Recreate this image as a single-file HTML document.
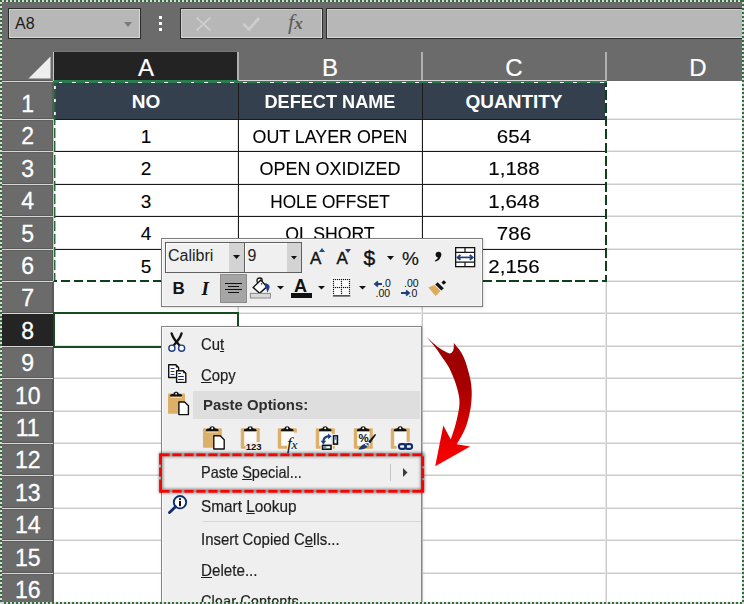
<!DOCTYPE html>
<html><head><meta charset="utf-8">
<style>
*{margin:0;padding:0;box-sizing:border-box}
html,body{width:744px;height:604px;overflow:hidden;background:#6b6b6b;font-family:"Liberation Sans",sans-serif}
.a{position:absolute}
.t{position:absolute;white-space:nowrap;line-height:normal}
svg{overflow:visible}
</style></head><body>
<div class="a" style="left:0;top:0;width:744px;height:604px;overflow:hidden">

<div class="a" style="left:8px;top:8px;width:133px;height:31px;background:#b7b7b7;border:1px solid #2c2c2c;box-shadow:inset 1px 1px 0 #cdcdcd, inset -1px -1px 0 #d9d9d9"></div>
<div class="t" style="left:15px;top:15.02px;font-size:16px;color:#1a1a1a;font-weight:normal;">A8</div>
<div class="a" style="left:124px;top:22px;width:0;height:0;border-left:4.5px solid transparent;border-right:4.5px solid transparent;border-top:5px solid #7a7a7a"></div>
<div class="a" style="left:158.5px;top:15.5px;width:3.5px;height:3.5px;background:#fff;"></div>
<div class="a" style="left:158.5px;top:21.5px;width:3.5px;height:3.5px;background:#fff;"></div>
<div class="a" style="left:158.5px;top:27.5px;width:3.5px;height:3.5px;background:#fff;"></div>
<div class="a" style="left:180px;top:8px;width:143px;height:31px;background:#b7b7b7;border:1px solid #2c2c2c;box-shadow:inset 1px 1px 0 #cdcdcd, inset -1px -1px 0 #d9d9d9"></div>
<div class="a" style="left:326px;top:8px;width:420px;height:31px;background:#b7b7b7;border:1px solid #2c2c2c;box-shadow:inset 1px 1px 0 #cdcdcd, inset -1px -1px 0 #d9d9d9"></div>
<svg class="a" style="left:195px;top:16px;" width="17" height="16" viewBox="0 0 17 16"><path d="M1.5,1.5 L15.5,14.5 M15.5,1.5 L1.5,14.5" stroke="#cdcdcd" stroke-width="1.8"/></svg>
<svg class="a" style="left:242px;top:16px;" width="18" height="16" viewBox="0 0 18 16"><path d="M1.5,8 L7,13.5 L17,2" stroke="#cdcdcd" stroke-width="2.8" fill="none"/></svg>
<div class="t" style="left:288px;top:9px;font-family:'Liberation Serif',serif;font-style:italic;font-size:22px;color:#5c5c5c">f<span style="font-size:17px;font-weight:bold">x</span></div>
<div class="a" style="left:54px;top:52px;width:184px;height:29px;background:#232323;"></div>
<div class="a" style="left:54px;top:51px;width:184px;height:1px;background:#777;"></div>
<div class="a" style="left:237px;top:52px;width:2px;height:29px;background:#b0b0b0;"></div>
<div class="a" style="left:421px;top:52px;width:2px;height:29px;background:#b0b0b0;"></div>
<div class="a" style="left:605px;top:52px;width:2px;height:29px;background:#b0b0b0;"></div>
<div class="a" style="left:53px;top:52px;width:1px;height:29px;background:#c8c8c8;"></div>
<div class="t" style="left:-54px;width:400px;text-align:center;top:53.78px;font-size:24px;color:#fff;font-weight:normal;-webkit-text-stroke:0.2px #fff">A</div>
<div class="t" style="left:130px;width:400px;text-align:center;top:53.78px;font-size:24px;color:#fff;font-weight:normal;-webkit-text-stroke:0.2px #fff">B</div>
<div class="t" style="left:314px;width:400px;text-align:center;top:53.78px;font-size:24px;color:#fff;font-weight:normal;-webkit-text-stroke:0.2px #fff">C</div>
<div class="t" style="left:498px;width:400px;text-align:center;top:53.78px;font-size:24px;color:#fff;font-weight:normal;-webkit-text-stroke:0.2px #fff">D</div>
<svg class="a" style="left:28px;top:56px;" width="23" height="23" viewBox="0 0 23 23"><polygon points="0.5,22.5 22.5,22.5 22.5,0.5" fill="#eeeeee"/></svg>
<div class="a" style="left:54px;top:81px;width:690px;height:523px;background:#fff;"></div>
<div class="a" style="left:54px;top:118px;width:690px;height:1px;background:#e6e6e6;"></div>
<div class="a" style="left:54px;top:119px;width:690px;height:1px;background:#cbcbcb;"></div>
<div class="a" style="left:54px;top:150px;width:690px;height:1px;background:#e6e6e6;"></div>
<div class="a" style="left:54px;top:151px;width:690px;height:1px;background:#cbcbcb;"></div>
<div class="a" style="left:54px;top:183px;width:690px;height:1px;background:#e6e6e6;"></div>
<div class="a" style="left:54px;top:184px;width:690px;height:1px;background:#cbcbcb;"></div>
<div class="a" style="left:54px;top:215px;width:690px;height:1px;background:#e6e6e6;"></div>
<div class="a" style="left:54px;top:216px;width:690px;height:1px;background:#cbcbcb;"></div>
<div class="a" style="left:54px;top:248px;width:690px;height:1px;background:#e6e6e6;"></div>
<div class="a" style="left:54px;top:249px;width:690px;height:1px;background:#cbcbcb;"></div>
<div class="a" style="left:54px;top:280px;width:690px;height:1px;background:#e6e6e6;"></div>
<div class="a" style="left:54px;top:281px;width:690px;height:1px;background:#cbcbcb;"></div>
<div class="a" style="left:54px;top:312px;width:690px;height:1px;background:#e6e6e6;"></div>
<div class="a" style="left:54px;top:313px;width:690px;height:1px;background:#cbcbcb;"></div>
<div class="a" style="left:54px;top:345px;width:690px;height:1px;background:#e6e6e6;"></div>
<div class="a" style="left:54px;top:346px;width:690px;height:1px;background:#cbcbcb;"></div>
<div class="a" style="left:54px;top:377px;width:690px;height:1px;background:#e6e6e6;"></div>
<div class="a" style="left:54px;top:378px;width:690px;height:1px;background:#cbcbcb;"></div>
<div class="a" style="left:54px;top:410px;width:690px;height:1px;background:#e6e6e6;"></div>
<div class="a" style="left:54px;top:411px;width:690px;height:1px;background:#cbcbcb;"></div>
<div class="a" style="left:54px;top:442px;width:690px;height:1px;background:#e6e6e6;"></div>
<div class="a" style="left:54px;top:443px;width:690px;height:1px;background:#cbcbcb;"></div>
<div class="a" style="left:54px;top:474px;width:690px;height:1px;background:#e6e6e6;"></div>
<div class="a" style="left:54px;top:475px;width:690px;height:1px;background:#cbcbcb;"></div>
<div class="a" style="left:54px;top:507px;width:690px;height:1px;background:#e6e6e6;"></div>
<div class="a" style="left:54px;top:508px;width:690px;height:1px;background:#cbcbcb;"></div>
<div class="a" style="left:54px;top:539px;width:690px;height:1px;background:#e6e6e6;"></div>
<div class="a" style="left:54px;top:540px;width:690px;height:1px;background:#cbcbcb;"></div>
<div class="a" style="left:54px;top:572px;width:690px;height:1px;background:#e6e6e6;"></div>
<div class="a" style="left:54px;top:573px;width:690px;height:1px;background:#cbcbcb;"></div>
<div class="a" style="left:54px;top:604px;width:690px;height:1px;background:#e6e6e6;"></div>
<div class="a" style="left:54px;top:605px;width:690px;height:1px;background:#cbcbcb;"></div>
<div class="a" style="left:237px;top:81px;width:1px;height:523px;background:#e6e6e6;"></div>
<div class="a" style="left:238px;top:81px;width:1px;height:523px;background:#cbcbcb;"></div>
<div class="a" style="left:421px;top:81px;width:1px;height:523px;background:#e6e6e6;"></div>
<div class="a" style="left:422px;top:81px;width:1px;height:523px;background:#cbcbcb;"></div>
<div class="a" style="left:605px;top:81px;width:1px;height:523px;background:#e6e6e6;"></div>
<div class="a" style="left:606px;top:81px;width:1px;height:523px;background:#cbcbcb;"></div>
<div class="a" style="left:0px;top:81px;width:53px;height:523px;background:#6b6b6b;"></div>
<div class="a" style="left:52px;top:81px;width:2px;height:523px;background:#5a5a5a;"></div>
<div class="a" style="left:0px;top:80px;width:53px;height:1px;background:#5a5a5a;"></div>
<div class="a" style="left:0px;top:82px;width:53px;height:1px;background:#5f5f5f;"></div>
<div class="a" style="left:0px;top:81px;width:53px;height:1px;background:#d8d8d8;"></div>
<div class="a" style="left:0px;top:118px;width:53px;height:1px;background:#5a5a5a;"></div>
<div class="a" style="left:0px;top:120px;width:53px;height:1px;background:#5f5f5f;"></div>
<div class="a" style="left:0px;top:119px;width:53px;height:1px;background:#d8d8d8;"></div>
<div class="a" style="left:0px;top:150px;width:53px;height:1px;background:#5a5a5a;"></div>
<div class="a" style="left:0px;top:152px;width:53px;height:1px;background:#5f5f5f;"></div>
<div class="a" style="left:0px;top:151px;width:53px;height:1px;background:#d8d8d8;"></div>
<div class="a" style="left:0px;top:183px;width:53px;height:1px;background:#5a5a5a;"></div>
<div class="a" style="left:0px;top:185px;width:53px;height:1px;background:#5f5f5f;"></div>
<div class="a" style="left:0px;top:184px;width:53px;height:1px;background:#d8d8d8;"></div>
<div class="a" style="left:0px;top:215px;width:53px;height:1px;background:#5a5a5a;"></div>
<div class="a" style="left:0px;top:217px;width:53px;height:1px;background:#5f5f5f;"></div>
<div class="a" style="left:0px;top:216px;width:53px;height:1px;background:#d8d8d8;"></div>
<div class="a" style="left:0px;top:248px;width:53px;height:1px;background:#5a5a5a;"></div>
<div class="a" style="left:0px;top:250px;width:53px;height:1px;background:#5f5f5f;"></div>
<div class="a" style="left:0px;top:249px;width:53px;height:1px;background:#d8d8d8;"></div>
<div class="a" style="left:0px;top:280px;width:53px;height:1px;background:#5a5a5a;"></div>
<div class="a" style="left:0px;top:282px;width:53px;height:1px;background:#5f5f5f;"></div>
<div class="a" style="left:0px;top:281px;width:53px;height:1px;background:#d8d8d8;"></div>
<div class="a" style="left:0px;top:312px;width:53px;height:1px;background:#5a5a5a;"></div>
<div class="a" style="left:0px;top:314px;width:53px;height:1px;background:#5f5f5f;"></div>
<div class="a" style="left:0px;top:313px;width:53px;height:1px;background:#d8d8d8;"></div>
<div class="a" style="left:0px;top:345px;width:53px;height:1px;background:#5a5a5a;"></div>
<div class="a" style="left:0px;top:347px;width:53px;height:1px;background:#5f5f5f;"></div>
<div class="a" style="left:0px;top:346px;width:53px;height:1px;background:#d8d8d8;"></div>
<div class="a" style="left:0px;top:377px;width:53px;height:1px;background:#5a5a5a;"></div>
<div class="a" style="left:0px;top:379px;width:53px;height:1px;background:#5f5f5f;"></div>
<div class="a" style="left:0px;top:378px;width:53px;height:1px;background:#d8d8d8;"></div>
<div class="a" style="left:0px;top:410px;width:53px;height:1px;background:#5a5a5a;"></div>
<div class="a" style="left:0px;top:412px;width:53px;height:1px;background:#5f5f5f;"></div>
<div class="a" style="left:0px;top:411px;width:53px;height:1px;background:#d8d8d8;"></div>
<div class="a" style="left:0px;top:442px;width:53px;height:1px;background:#5a5a5a;"></div>
<div class="a" style="left:0px;top:444px;width:53px;height:1px;background:#5f5f5f;"></div>
<div class="a" style="left:0px;top:443px;width:53px;height:1px;background:#d8d8d8;"></div>
<div class="a" style="left:0px;top:474px;width:53px;height:1px;background:#5a5a5a;"></div>
<div class="a" style="left:0px;top:476px;width:53px;height:1px;background:#5f5f5f;"></div>
<div class="a" style="left:0px;top:475px;width:53px;height:1px;background:#d8d8d8;"></div>
<div class="a" style="left:0px;top:507px;width:53px;height:1px;background:#5a5a5a;"></div>
<div class="a" style="left:0px;top:509px;width:53px;height:1px;background:#5f5f5f;"></div>
<div class="a" style="left:0px;top:508px;width:53px;height:1px;background:#d8d8d8;"></div>
<div class="a" style="left:0px;top:539px;width:53px;height:1px;background:#5a5a5a;"></div>
<div class="a" style="left:0px;top:541px;width:53px;height:1px;background:#5f5f5f;"></div>
<div class="a" style="left:0px;top:540px;width:53px;height:1px;background:#d8d8d8;"></div>
<div class="a" style="left:0px;top:572px;width:53px;height:1px;background:#5a5a5a;"></div>
<div class="a" style="left:0px;top:574px;width:53px;height:1px;background:#5f5f5f;"></div>
<div class="a" style="left:0px;top:573px;width:53px;height:1px;background:#d8d8d8;"></div>
<div class="a" style="left:0px;top:314px;width:53px;height:32px;background:#242424;"></div>
<div class="t" style="left:-172.3px;width:400px;text-align:center;top:91.19px;font-size:23px;color:#fff;font-weight:normal;-webkit-text-stroke:0.3px #fff">1</div>
<div class="t" style="left:-172.3px;width:400px;text-align:center;top:123.19px;font-size:23px;color:#fff;font-weight:normal;-webkit-text-stroke:0.3px #fff">2</div>
<div class="t" style="left:-172.3px;width:400px;text-align:center;top:156.19px;font-size:23px;color:#fff;font-weight:normal;-webkit-text-stroke:0.3px #fff">3</div>
<div class="t" style="left:-172.3px;width:400px;text-align:center;top:188.19px;font-size:23px;color:#fff;font-weight:normal;-webkit-text-stroke:0.3px #fff">4</div>
<div class="t" style="left:-172.3px;width:400px;text-align:center;top:221.19px;font-size:23px;color:#fff;font-weight:normal;-webkit-text-stroke:0.3px #fff">5</div>
<div class="t" style="left:-172.3px;width:400px;text-align:center;top:253.19px;font-size:23px;color:#fff;font-weight:normal;-webkit-text-stroke:0.3px #fff">6</div>
<div class="t" style="left:-172.3px;width:400px;text-align:center;top:285.19px;font-size:23px;color:#fff;font-weight:normal;-webkit-text-stroke:0.3px #fff">7</div>
<div class="t" style="left:-172.3px;width:400px;text-align:center;top:318.19px;font-size:23px;color:#fff;font-weight:normal;-webkit-text-stroke:0.3px #fff">8</div>
<div class="t" style="left:-172.3px;width:400px;text-align:center;top:350.19px;font-size:23px;color:#fff;font-weight:normal;-webkit-text-stroke:0.3px #fff">9</div>
<div class="t" style="left:-172.3px;width:400px;text-align:center;top:383.19px;font-size:23px;color:#fff;font-weight:normal;-webkit-text-stroke:0.3px #fff">10</div>
<div class="t" style="left:-172.3px;width:400px;text-align:center;top:415.19px;font-size:23px;color:#fff;font-weight:normal;-webkit-text-stroke:0.3px #fff">11</div>
<div class="t" style="left:-172.3px;width:400px;text-align:center;top:447.19px;font-size:23px;color:#fff;font-weight:normal;-webkit-text-stroke:0.3px #fff">12</div>
<div class="t" style="left:-172.3px;width:400px;text-align:center;top:480.19px;font-size:23px;color:#fff;font-weight:normal;-webkit-text-stroke:0.3px #fff">13</div>
<div class="t" style="left:-172.3px;width:400px;text-align:center;top:512.18px;font-size:23px;color:#fff;font-weight:normal;-webkit-text-stroke:0.3px #fff">14</div>
<div class="t" style="left:-172.3px;width:400px;text-align:center;top:545.18px;font-size:23px;color:#fff;font-weight:normal;-webkit-text-stroke:0.3px #fff">15</div>
<div class="t" style="left:-172.3px;width:400px;text-align:center;top:577.18px;font-size:23px;color:#fff;font-weight:normal;-webkit-text-stroke:0.3px #fff">16</div>
<div class="a" style="left:54px;top:81px;width:552px;height:38px;background:#35404f;"></div>
<div class="a" style="left:54px;top:119px;width:552px;height:1px;background:#1a1a1a;"></div>
<div class="a" style="left:54px;top:151px;width:552px;height:1px;background:#1a1a1a;"></div>
<div class="a" style="left:54px;top:184px;width:552px;height:1px;background:#1a1a1a;"></div>
<div class="a" style="left:54px;top:216px;width:552px;height:1px;background:#1a1a1a;"></div>
<div class="a" style="left:54px;top:249px;width:552px;height:1px;background:#1a1a1a;"></div>
<div class="a" style="left:238px;top:81px;width:1px;height:200px;background:#1a1a1a;"></div>
<div class="a" style="left:422px;top:81px;width:1px;height:200px;background:#1a1a1a;"></div>
<div class="t" style="left:-54px;width:400px;text-align:center;top:91.31px;font-size:19px;color:#fff;font-weight:bold;">NO</div>
<div class="t" style="left:130px;width:400px;text-align:center;top:91.31px;font-size:19px;color:#fff;font-weight:bold;transform:scaleX(0.954);">DEFECT NAME</div>
<div class="t" style="left:314px;width:400px;text-align:center;top:91.31px;font-size:19px;color:#fff;font-weight:bold;">QUANTITY</div>
<div class="t" style="left:-54px;width:400px;text-align:center;top:125.81px;font-size:19px;color:#000;font-weight:normal;-webkit-text-stroke:0.12px #000">1</div>
<div class="t" style="left:130px;width:400px;text-align:center;top:125.81px;font-size:19px;color:#000;font-weight:normal;transform:scaleX(0.939);-webkit-text-stroke:0.12px #000">OUT LAYER OPEN</div>
<div class="t" style="left:314px;width:400px;text-align:center;top:125.81px;font-size:19px;color:#000;font-weight:normal;transform:scaleX(1.08);-webkit-text-stroke:0.12px #000">654</div>
<div class="t" style="left:-54px;width:400px;text-align:center;top:157.81px;font-size:19px;color:#000;font-weight:normal;-webkit-text-stroke:0.12px #000">2</div>
<div class="t" style="left:130px;width:400px;text-align:center;top:157.81px;font-size:19px;color:#000;font-weight:normal;transform:scaleX(0.946);-webkit-text-stroke:0.12px #000">OPEN OXIDIZED</div>
<div class="t" style="left:314px;width:400px;text-align:center;top:157.81px;font-size:19px;color:#000;font-weight:normal;transform:scaleX(1.08);-webkit-text-stroke:0.12px #000">1,188</div>
<div class="t" style="left:-54px;width:400px;text-align:center;top:190.81px;font-size:19px;color:#000;font-weight:normal;-webkit-text-stroke:0.12px #000">3</div>
<div class="t" style="left:130px;width:400px;text-align:center;top:190.81px;font-size:19px;color:#000;font-weight:normal;transform:scaleX(0.905);-webkit-text-stroke:0.12px #000">HOLE OFFSET</div>
<div class="t" style="left:314px;width:400px;text-align:center;top:190.81px;font-size:19px;color:#000;font-weight:normal;transform:scaleX(1.08);-webkit-text-stroke:0.12px #000">1,648</div>
<div class="t" style="left:-54px;width:400px;text-align:center;top:222.81px;font-size:19px;color:#000;font-weight:normal;-webkit-text-stroke:0.12px #000">4</div>
<div class="t" style="left:130px;width:400px;text-align:center;top:222.81px;font-size:19px;color:#000;font-weight:normal;transform:scaleX(0.93);-webkit-text-stroke:0.12px #000">OL SHORT</div>
<div class="t" style="left:314px;width:400px;text-align:center;top:222.81px;font-size:19px;color:#000;font-weight:normal;transform:scaleX(1.08);-webkit-text-stroke:0.12px #000">786</div>
<div class="t" style="left:-54px;width:400px;text-align:center;top:255.81px;font-size:19px;color:#000;font-weight:normal;-webkit-text-stroke:0.12px #000">5</div>
<div class="t" style="left:314px;width:400px;text-align:center;top:255.81px;font-size:19px;color:#000;font-weight:normal;transform:scaleX(1.08);-webkit-text-stroke:0.12px #000">2,156</div>
<div class="a" style="left:54px;top:80px;width:184px;height:1px;background:#2a7d4c;"></div>
<div class="a" style="left:239px;top:80px;width:367px;height:1px;background:#d4d4d4;"></div>
<div class="a" style="left:54px;top:81px;width:553px;height:2px;background:repeating-linear-gradient(90deg,#2a7d4c 0 4.6px,#ffffff 4.6px 8.4px,#2a7d4c 8.4px 13.2px);"></div>
<div class="a" style="left:54px;top:81px;width:553px;height:1px;background:#2a7d4c;"></div>
<div class="a" style="left:53px;top:119px;width:1px;height:162px;background:#c8c8c8;"></div>
<div class="a" style="left:54px;top:83px;width:1px;height:199px;background:repeating-linear-gradient(180deg,#1f6a36 0 2.6px,#f4f4f4 2.6px 5.6px,#1f6a36 5.6px 13.2px);"></div>
<div class="a" style="left:55px;top:83px;width:1px;height:199px;background:repeating-linear-gradient(180deg,rgba(31,106,54,0.45) 0 2.6px,rgba(255,255,255,0.8) 2.6px 5.6px,rgba(31,106,54,0.45) 5.6px 13.2px);"></div>
<div class="a" style="left:605px;top:83px;width:2px;height:199px;background:repeating-linear-gradient(180deg,#0e4019 0 3.6px,#ffffff 3.6px 6.8px,#0e4019 6.8px 13.2px);"></div>
<div class="a" style="left:54px;top:280px;width:553px;height:2px;background:repeating-linear-gradient(90deg,#0e4019 0 2.9px,#ffffff 2.9px 6.7px,#0e4019 6.7px 13.2px);"></div>
<div class="a" style="left:53px;top:312px;width:186px;height:36px;border:2px solid #134d20"></div>
<div class="a" style="left:161px;top:238px;width:322px;height:69px;background:#efefef;border:1px solid #7d7d7d;box-shadow:inset 1px 1px 0 #fafafa, inset -1px -1px 0 #fafafa, 1px 1px 3px rgba(0,0,0,0.12)"></div>
<div class="a" style="left:165px;top:242px;width:80px;height:31px;background:#f0f0f0;border:1px solid #5e5e5e;box-shadow:inset 1px 1px 0 #fbfbfb"></div>
<div class="a" style="left:229px;top:243px;width:15px;height:29px;background:#d3d3d3;"></div>
<svg class="a" style="left:233px;top:255px;" width="7" height="4" viewBox="0 0 7 4"><polygon points="0,0 7,0 3.5,4" fill="#111"/></svg>
<div class="t" style="left:168px;top:247.12px;font-size:16px;color:#222;font-weight:normal;">Calibri</div>
<div class="a" style="left:244px;top:242px;width:58px;height:31px;background:#f0f0f0;border:1px solid #5e5e5e;box-shadow:inset 1px 1px 0 #fbfbfb"></div>
<div class="a" style="left:287px;top:243px;width:14px;height:29px;background:#d3d3d3;"></div>
<svg class="a" style="left:291px;top:256px;" width="6" height="3.5" viewBox="0 0 6 3.5"><polygon points="0,0 6,0 3,3.5" fill="#111"/></svg>
<div class="t" style="left:247.5px;top:247.12px;font-size:16px;color:#222;font-weight:normal;">9</div>
<div class="t" style="left:310px;top:249.12px;font-size:17px;color:#111;font-weight:normal;-webkit-text-stroke:0.4px #111">A</div>
<svg class="a" style="left:319px;top:248px;" width="6" height="4" viewBox="0 0 6 4"><polygon points="0,4 3,0 6,4" fill="#1e4e8c"/></svg>
<div class="t" style="left:336.5px;top:249.12px;font-size:17px;color:#111;font-weight:normal;-webkit-text-stroke:0.4px #111">A</div>
<svg class="a" style="left:345px;top:249px;" width="6" height="4" viewBox="0 0 6 4"><polygon points="0,0 6,0 3,4" fill="#1f3a6e"/></svg>
<div class="t" style="left:363.5px;top:246.00px;font-size:21px;color:#111;font-weight:normal;-webkit-text-stroke:0.4px #111">$</div>
<svg class="a" style="left:387px;top:256px;" width="7" height="4" viewBox="0 0 7 4"><polygon points="0,0 7,0 3.5,4" fill="#111"/></svg>
<div class="t" style="left:402px;top:247.81px;font-size:19px;color:#111;font-weight:normal;-webkit-text-stroke:0.15px #111">%</div>
<svg class="a" style="left:432px;top:250px;" width="12" height="14" viewBox="0 0 12 14"><circle cx="6.5" cy="4.6" r="2.9" fill="#111"/><path d="M8.6,5.4 C8.8,8.5 6.5,10.8 3,11.6 L2.8,10.6 C5,9.6 6.2,8.2 6,6.2 Z" fill="#111"/></svg>
<svg class="a" style="left:455px;top:247px;" width="21" height="21" viewBox="0 0 21 21"><rect x="0.65" y="0.65" width="19" height="19" fill="#fff" stroke="#111" stroke-width="1.3"/><path d="M0.6,5.4 H19.6 M0.6,15.2 H19.6 M10,0.6 V5.4 M10,15.2 V19.6" stroke="#111" stroke-width="1.2"/><path d="M3.2,10.4 H17" stroke="#1f3f7a" stroke-width="1.7"/><path d="M5.4,8 L2.6,10.4 L5.4,12.8 M14.8,8 L17.6,10.4 L14.8,12.8" stroke="#1f3f7a" stroke-width="1.9" fill="none"/></svg>
<div class="t" style="left:172.5px;top:278.81px;font-size:17px;color:#111;font-weight:bold;">B</div>
<div class="t" style="left:201.5px;top:277.5px;font-family:'Liberation Serif',serif;font-style:italic;font-weight:bold;font-size:19px;color:#111">I</div>
<div class="a" style="left:220px;top:274px;width:27px;height:29px;background:#a5a5a5;border:1px solid #8c8c8c"></div>
<div class="a" style="left:225px;top:283px;width:17px;height:1.3px;background:#111;"></div>
<div class="a" style="left:228px;top:286px;width:11px;height:1.3px;background:#111;"></div>
<div class="a" style="left:225px;top:289px;width:17px;height:1.3px;background:#111;"></div>
<div class="a" style="left:228px;top:292px;width:11px;height:1.3px;background:#111;"></div>
<svg class="a" style="left:248px;top:274px;" width="26" height="26" viewBox="0 0 26 26"><path d="M9.6,9.2 C8.2,5.5 9.2,4 11.6,4 C14,4 14.8,5.2 13.6,7.6" fill="none" stroke="#111" stroke-width="1.3"/><path d="M5.2,13.4 L12.9,6 L18.75,12.9 L11.6,19.2 Z" fill="#fff" stroke="#111" stroke-width="1.4" stroke-linejoin="miter"/><path d="M13.6,9.2 V10.5" stroke="#111" stroke-width="1.2"/><path d="M16.5,9 C19.5,9.3 22,11 21.6,13.2 C21.2,15.2 20.2,17 19.1,18.6 C18.8,16 18.4,14 17.3,12.8 Z" fill="#1f3f8a"/><rect x="2.4" y="19.4" width="20" height="4.6" fill="#dadada" stroke="#8a8a8a" stroke-width="1"/></svg>
<svg class="a" style="left:277px;top:286px;" width="7" height="3.5" viewBox="0 0 7 3.5"><polygon points="0,0 7,0 3.5,3.5" fill="#111"/></svg>
<div class="t" style="left:294px;top:275.71px;font-size:18px;color:#111;font-weight:bold;">A</div>
<div class="a" style="left:291px;top:293px;width:21px;height:5px;background:#111;"></div>
<svg class="a" style="left:318px;top:286px;" width="7" height="3.5" viewBox="0 0 7 3.5"><polygon points="0,0 7,0 3.5,3.5" fill="#111"/></svg>
<svg class="a" style="left:328px;top:274px;" width="26" height="26" viewBox="0 0 26 26"><rect x="3.5" y="3.5" width="19" height="19.5" fill="#fff"/><rect x="4.9" y="4.9" width="1.2" height="1.2" fill="#111"/><rect x="4.9" y="6.9" width="1.2" height="1.2" fill="#111"/><rect x="4.9" y="8.9" width="1.2" height="1.2" fill="#111"/><rect x="4.9" y="10.9" width="1.2" height="1.2" fill="#111"/><rect x="4.9" y="12.9" width="1.2" height="1.2" fill="#111"/><rect x="4.9" y="14.9" width="1.2" height="1.2" fill="#111"/><rect x="4.9" y="16.9" width="1.2" height="1.2" fill="#111"/><rect x="4.9" y="18.9" width="1.2" height="1.2" fill="#111"/><rect x="6.9" y="4.9" width="1.2" height="1.2" fill="#111"/><rect x="6.9" y="12.9" width="1.2" height="1.2" fill="#111"/><rect x="8.9" y="4.9" width="1.2" height="1.2" fill="#111"/><rect x="8.9" y="12.9" width="1.2" height="1.2" fill="#111"/><rect x="10.9" y="4.9" width="1.2" height="1.2" fill="#111"/><rect x="10.9" y="12.9" width="1.2" height="1.2" fill="#111"/><rect x="12.9" y="4.9" width="1.2" height="1.2" fill="#111"/><rect x="12.9" y="6.9" width="1.2" height="1.2" fill="#111"/><rect x="12.9" y="8.9" width="1.2" height="1.2" fill="#111"/><rect x="12.9" y="10.9" width="1.2" height="1.2" fill="#111"/><rect x="12.9" y="12.9" width="1.2" height="1.2" fill="#111"/><rect x="12.9" y="14.9" width="1.2" height="1.2" fill="#111"/><rect x="12.9" y="16.9" width="1.2" height="1.2" fill="#111"/><rect x="12.9" y="18.9" width="1.2" height="1.2" fill="#111"/><rect x="14.9" y="4.9" width="1.2" height="1.2" fill="#111"/><rect x="14.9" y="12.9" width="1.2" height="1.2" fill="#111"/><rect x="16.9" y="4.9" width="1.2" height="1.2" fill="#111"/><rect x="16.9" y="12.9" width="1.2" height="1.2" fill="#111"/><rect x="18.9" y="4.9" width="1.2" height="1.2" fill="#111"/><rect x="18.9" y="12.9" width="1.2" height="1.2" fill="#111"/><rect x="20.9" y="4.9" width="1.2" height="1.2" fill="#111"/><rect x="20.9" y="6.9" width="1.2" height="1.2" fill="#111"/><rect x="20.9" y="8.9" width="1.2" height="1.2" fill="#111"/><rect x="20.9" y="10.9" width="1.2" height="1.2" fill="#111"/><rect x="20.9" y="12.9" width="1.2" height="1.2" fill="#111"/><rect x="20.9" y="14.9" width="1.2" height="1.2" fill="#111"/><rect x="20.9" y="16.9" width="1.2" height="1.2" fill="#111"/><rect x="20.9" y="18.9" width="1.2" height="1.2" fill="#111"/><rect x="4.8" y="21" width="17.5" height="1.7" fill="#555"/></svg>
<svg class="a" style="left:359px;top:286px;" width="7" height="3.5" viewBox="0 0 7 3.5"><polygon points="0,0 7,0 3.5,3.5" fill="#111"/></svg>
<svg class="a" style="left:374px;top:281px;" width="9" height="6" viewBox="0 0 9 6"><path d="M1,3 H8 M4,0.5 L1,3 L4,5.5" stroke="#1f3f7a" stroke-width="1.8" fill="none"/></svg>
<div class="t" style="left:382px;top:277.00px;font-size:10.5px;color:#111;font-weight:normal;">.0</div>
<div class="t" style="left:375.5px;top:286.70px;font-size:10.5px;color:#111;font-weight:normal;">.00</div>
<div class="t" style="left:404px;top:277.00px;font-size:10.5px;color:#111;font-weight:normal;">.00</div>
<svg class="a" style="left:401px;top:290px;" width="9" height="6" viewBox="0 0 9 6"><path d="M0,3 H7 M5,0.5 L8,3 L5,5.5" stroke="#1f3f7a" stroke-width="1.8" fill="none"/></svg>
<div class="t" style="left:408.5px;top:286.70px;font-size:10.5px;color:#111;font-weight:normal;">.0</div>
<svg class="a" style="left:424px;top:276px;" width="26" height="24" viewBox="0 0 26 24"><path d="M4.4,11.5 L10.2,9.1 L16.5,15.1 L11.6,19.9 Z" fill="#deaa58"/><path d="M11.2,8.4 L13.6,6.2 L19.8,12.3 L17.4,14.5 Z" fill="#111"/><path d="M17.4,6.6 L19.9,4.2 L22.2,6.4 L19.7,8.8 Z" fill="#111"/></svg>
<div class="a" style="left:161px;top:326px;width:261px;height:290px;background:#efefef;border:1px solid #858585;border-right:1.5px solid #858585;box-shadow:inset 1px 1px 0 #f9f9f9, 1px 1px 3px rgba(0,0,0,0.12)"></div>
<div class="a" style="left:193px;top:391px;width:227px;height:28px;background:#dedede;"></div>
<div class="t" style="left:200.5px;top:335.07px;font-size:16.5px;color:#1e1e1e;font-weight:normal;transform:scaleX(0.9);transform-origin:0 0;-webkit-text-stroke:0.2px #1e1e1e">Cu<u>t</u></div>
<div class="t" style="left:200.5px;top:366.27px;font-size:16.5px;color:#1e1e1e;font-weight:normal;transform:scaleX(0.9);transform-origin:0 0;-webkit-text-stroke:0.2px #1e1e1e"><u>C</u>opy</div>
<div class="t" style="left:203.2px;top:396.45px;font-size:15.3px;color:#2e2e2e;font-weight:bold;transform:scaleX(0.975);transform-origin:0 0;">Paste Options:</div>
<div class="t" style="left:201px;top:463.07px;font-size:16.5px;color:#1e1e1e;font-weight:normal;transform:scaleX(0.88);transform-origin:0 0;-webkit-text-stroke:0.2px #1e1e1e">Paste <u>S</u>pecial...</div>
<div class="t" style="left:200.5px;top:497.37px;font-size:16.5px;color:#1e1e1e;font-weight:normal;transform:scaleX(0.93);transform-origin:0 0;-webkit-text-stroke:0.2px #1e1e1e">Smart <u>L</u>ookup</div>
<div class="a" style="left:203px;top:521px;width:218px;height:1px;background:#d6d6d6;"></div>
<div class="t" style="left:200.5px;top:529.77px;font-size:16.5px;color:#1e1e1e;font-weight:normal;transform:scaleX(0.905);transform-origin:0 0;-webkit-text-stroke:0.2px #1e1e1e">Insert Copied C<u>e</u>lls...</div>
<div class="t" style="left:200.5px;top:561.07px;font-size:16.5px;color:#1e1e1e;font-weight:normal;transform:scaleX(0.92);transform-origin:0 0;-webkit-text-stroke:0.2px #1e1e1e"><u>D</u>elete...</div>
<div class="t" style="left:200.5px;top:592.07px;font-size:16.5px;color:#1e1e1e;font-weight:normal;transform:scaleX(0.89);transform-origin:0 0;-webkit-text-stroke:0.2px #1e1e1e">Clear Contents</div>
<div class="a" style="left:390px;top:464px;width:1px;height:17px;background:#c4c4c4;"></div>
<svg class="a" style="left:403px;top:468px;" width="5" height="9" viewBox="0 0 5 9"><polygon points="0,0 4.5,4.5 0,9" fill="#3c3c3c"/></svg>
<svg class="a" style="left:167px;top:332px;" width="20" height="21" viewBox="0 0 20 21"><path d="M4.6,1.4 Q6.2,6.8 12.4,13.2" stroke="#111" stroke-width="2.3" fill="none" stroke-linecap="round"/><path d="M14.6,1.4 Q13,6.8 6.8,13.2" stroke="#111" stroke-width="2.3" fill="none" stroke-linecap="round"/><circle cx="4.9" cy="16.2" r="3.05" fill="#fbfbfb" stroke="#1f3f80" stroke-width="1.4"/><circle cx="14.6" cy="16.2" r="3.05" fill="#fbfbfb" stroke="#1f3f80" stroke-width="1.4"/></svg>
<svg class="a" style="left:164px;top:360px;" width="26" height="26" viewBox="0 0 26 26"><path d="M4.7,4.7 H11.8 L14.6,7.5 V17.5 H4.7 Z" fill="#fff" stroke="#111" stroke-width="1.4" stroke-linejoin="round"/><path d="M11.8,4.7 V7.5 H14.6" fill="#111"/><path d="M6.6,8.5 H10.4 M6.6,11.5 H10.4 M6.6,14.5 H10.4" stroke="#1f3a78" stroke-width="1.1"/><path d="M12.6,10.7 H19.2 L21.8,13.3 V22.4 H12.6 Z" fill="#fff" stroke="#111" stroke-width="1.4" stroke-linejoin="round"/><path d="M19.2,10.7 V13.3 H21.8" fill="#111"/><path d="M14.2,13.5 H16.8 M14.2,16.5 H19.8 M14.2,19.5 H19.8" stroke="#0f2a6a" stroke-width="1.1"/></svg>
<svg class="a" style="left:165px;top:390px;" width="28" height="28" viewBox="0 0 28 28"><rect x="3" y="3.6" width="17" height="20.2" rx="0.8" fill="#ddb06a"/><rect x="6" y="6.6" width="11" height="1.2" fill="#f3e2c4"/><path d="M5.4,6.6 C4.9,6.6 4.9,4.6 6,4.3 L8.6,3.7 C8.6,1.2 13.6,1.2 13.6,3.7 L16.2,4.3 C17.3,4.6 17.3,6.6 16.8,6.6 Z" fill="#111"/><circle cx="11.1" cy="3.7" r="0.9" fill="#fff"/><path d="M13.9,12 H19.6 L23.4,15.8 V24.6 H13.9 Z" fill="#fff" stroke="#111" stroke-width="1.4" stroke-linejoin="round"/></svg>
<svg class="a" style="left:200px;top:422px;" width="28" height="30" viewBox="0 0 28 30"><rect x="3" y="6.3" width="18.8" height="19.5" rx="0.8" fill="#ddb06a"/><rect x="6.5" y="9.3" width="11.5" height="1.2" fill="#f3e2c4"/><path d="M6.2,9.3 C5.6,9.3 5.6,7.2 6.8,6.9 L9.6,6.3 C9.6,3.6 14.8,3.6 14.8,6.3 L17.6,6.9 C18.8,7.2 18.8,9.3 18.2,9.3 Z" fill="#111"/><circle cx="12.2" cy="6.3" r="1" fill="#fff"/><path d="M13.8,13.8 H20.2 L24.2,17.8 V27 H13.8 Z" fill="#fff" stroke="#111" stroke-width="1.4" stroke-linejoin="round"/></svg>
<svg class="a" style="left:238px;top:422px;" width="28" height="30" viewBox="0 0 28 30"><rect x="2.8" y="6.3" width="19" height="20.4" rx="0.8" fill="#ddb06a"/><rect x="6.2" y="9.4" width="12.4" height="14.4" fill="#fbfbfb"/><path d="M6.2,9.3 C5.6,9.3 5.6,7.2 6.8,6.9 L9.6,6.3 C9.6,3.6 14.8,3.6 14.8,6.3 L17.6,6.9 C18.8,7.2 18.8,9.3 18.2,9.3 Z" fill="#111"/><circle cx="12.2" cy="6.3" r="1" fill="#fff"/><rect x="7.6" y="20" width="17.4" height="8.2" fill="#f0f0f0"/><text x="7.7" y="27.6" font-family="Liberation Sans" font-weight="bold" font-size="9.6" fill="#111">123</text></svg>
<svg class="a" style="left:275px;top:422px;" width="28" height="30" viewBox="0 0 28 30"><rect x="2.8" y="6.3" width="19" height="20.4" rx="0.8" fill="#ddb06a"/><rect x="6.2" y="9.4" width="12.4" height="14.4" fill="#fbfbfb"/><path d="M6.2,9.3 C5.6,9.3 5.6,7.2 6.8,6.9 L9.6,6.3 C9.6,3.6 14.8,3.6 14.8,6.3 L17.6,6.9 C18.8,7.2 18.8,9.3 18.2,9.3 Z" fill="#111"/><circle cx="12.2" cy="6.3" r="1" fill="#fff"/><rect x="12.5" y="10.5" width="6.5" height="13.4" fill="#fbfbfb"/><rect x="19" y="10.5" width="4" height="17" fill="#f0f0f0"/><rect x="12" y="23.8" width="12" height="4" fill="#f0f0f0"/><text x="12" y="26.6" font-family="Liberation Serif" font-style="italic" font-size="17.5" fill="#111">f<tspan font-size="13.5" dx="-0.5">x</tspan></text></svg>
<svg class="a" style="left:313px;top:422px;" width="28" height="30" viewBox="0 0 28 30"><rect x="2.8" y="6.3" width="19" height="20.4" rx="0.8" fill="#ddb06a"/><rect x="6.2" y="9.4" width="12.4" height="14.4" fill="#fbfbfb"/><path d="M6.2,9.3 C5.6,9.3 5.6,7.2 6.8,6.9 L9.6,6.3 C9.6,3.6 14.8,3.6 14.8,6.3 L17.6,6.9 C18.8,7.2 18.8,9.3 18.2,9.3 Z" fill="#111"/><circle cx="12.2" cy="6.3" r="1" fill="#fff"/><rect x="18.6" y="12" width="7.5" height="12" fill="#f0f0f0"/><rect x="7.8" y="21.8" width="12" height="6.6" fill="#f0f0f0"/><path d="M10.4,20.2 C10.2,16.8 12.2,14.6 15.8,14.2" stroke="#1f3f7a" stroke-width="2.2" fill="none"/><path d="M15,11.4 L18.6,14.2 L15.2,17.2 Z" fill="#1f3f7a"/><path d="M7.6,18.8 L10.4,22.4 L13.2,18.8 Z" fill="#1f3f7a"/><rect x="20.6" y="13.9" width="3.8" height="8.2" fill="#fff" stroke="#111" stroke-width="1.6"/><rect x="21.2" y="14.6" width="2.6" height="3.2" fill="#5b8fd0"/><rect x="9.6" y="23.4" width="8.4" height="3.8" fill="#fff" stroke="#111" stroke-width="1.6"/><rect x="10.3" y="24.1" width="3" height="2.4" fill="#5b8fd0"/></svg>
<svg class="a" style="left:351px;top:422px;" width="28" height="30" viewBox="0 0 28 30"><rect x="2.8" y="6.3" width="19" height="20.4" rx="0.8" fill="#ddb06a"/><rect x="6.2" y="9.4" width="12.4" height="14.4" fill="#fbfbfb"/><path d="M6.2,9.3 C5.6,9.3 5.6,7.2 6.8,6.9 L9.6,6.3 C9.6,3.6 14.8,3.6 14.8,6.3 L17.6,6.9 C18.8,7.2 18.8,9.3 18.2,9.3 Z" fill="#111"/><circle cx="12.2" cy="6.3" r="1" fill="#fff"/><text x="7.4" y="19.6" font-family="Liberation Sans" font-weight="bold" font-size="11.5" fill="#111">%</text><path d="M17.2,19.8 L23.4,12.6 C24.6,11.4 25.2,12 24.6,13.4 L19.2,21.2 Z" fill="#111"/><path d="M7.4,27.6 C9.5,23.5 13,21 17.5,21.2 C18.5,24 15.5,27.6 7.4,27.6 Z" fill="#1a3a7a"/><path d="M14,22.6 C15.5,22.4 16.6,23 16.2,24.4" stroke="#fff" stroke-width="1.2" fill="none"/></svg>
<svg class="a" style="left:388px;top:422px;" width="28" height="30" viewBox="0 0 28 30"><rect x="2.8" y="6.3" width="19" height="20.4" rx="0.8" fill="#ddb06a"/><rect x="6.2" y="9.4" width="12.4" height="14.4" fill="#fbfbfb"/><path d="M6.2,9.3 C5.6,9.3 5.6,7.2 6.8,6.9 L9.6,6.3 C9.6,3.6 14.8,3.6 14.8,6.3 L17.6,6.9 C18.8,7.2 18.8,9.3 18.2,9.3 Z" fill="#111"/><circle cx="12.2" cy="6.3" r="1" fill="#fff"/><rect x="8.6" y="19.8" width="17" height="9" fill="#f4f4f4"/><rect x="10.9" y="22.1" width="6.9" height="4.8" rx="2.4" fill="none" stroke="#0f2d6b" stroke-width="2.1"/><rect x="17.2" y="22.1" width="6.9" height="4.8" rx="2.4" fill="none" stroke="#0f2d6b" stroke-width="2.1"/></svg>
<svg class="a" style="left:150px;top:445px;" width="285" height="56" viewBox="0 0 285 56"><defs><filter id="sh" x="-10%" y="-30%" width="120%" height="160%"><feGaussianBlur stdDeviation="1.6"/></filter></defs><rect x="11" y="9.7" width="261.6" height="36.2" fill="none" stroke="rgba(0,0,0,0.45)" stroke-width="4" filter="url(#sh)"/><g fill="#ff0000"><rect x="10.40" y="8.40" width="9.10" height="2.80"/><rect x="10.40" y="44.90" width="9.10" height="2.80"/><rect x="22.40" y="8.40" width="9.10" height="2.80"/><rect x="22.40" y="44.90" width="9.10" height="2.80"/><rect x="34.40" y="8.40" width="9.10" height="2.80"/><rect x="34.40" y="44.90" width="9.10" height="2.80"/><rect x="46.40" y="8.40" width="9.10" height="2.80"/><rect x="46.40" y="44.90" width="9.10" height="2.80"/><rect x="58.40" y="8.40" width="9.10" height="2.80"/><rect x="58.40" y="44.90" width="9.10" height="2.80"/><rect x="70.40" y="8.40" width="9.10" height="2.80"/><rect x="70.40" y="44.90" width="9.10" height="2.80"/><rect x="82.40" y="8.40" width="9.10" height="2.80"/><rect x="82.40" y="44.90" width="9.10" height="2.80"/><rect x="94.40" y="8.40" width="9.10" height="2.80"/><rect x="94.40" y="44.90" width="9.10" height="2.80"/><rect x="106.40" y="8.40" width="9.10" height="2.80"/><rect x="106.40" y="44.90" width="9.10" height="2.80"/><rect x="118.40" y="8.40" width="9.10" height="2.80"/><rect x="118.40" y="44.90" width="9.10" height="2.80"/><rect x="130.40" y="8.40" width="9.10" height="2.80"/><rect x="130.40" y="44.90" width="9.10" height="2.80"/><rect x="142.40" y="8.40" width="9.10" height="2.80"/><rect x="142.40" y="44.90" width="9.10" height="2.80"/><rect x="154.40" y="8.40" width="9.10" height="2.80"/><rect x="154.40" y="44.90" width="9.10" height="2.80"/><rect x="166.40" y="8.40" width="9.10" height="2.80"/><rect x="166.40" y="44.90" width="9.10" height="2.80"/><rect x="178.40" y="8.40" width="9.10" height="2.80"/><rect x="178.40" y="44.90" width="9.10" height="2.80"/><rect x="190.40" y="8.40" width="9.10" height="2.80"/><rect x="190.40" y="44.90" width="9.10" height="2.80"/><rect x="202.40" y="8.40" width="9.10" height="2.80"/><rect x="202.40" y="44.90" width="9.10" height="2.80"/><rect x="214.40" y="8.40" width="9.10" height="2.80"/><rect x="214.40" y="44.90" width="9.10" height="2.80"/><rect x="226.40" y="8.40" width="9.10" height="2.80"/><rect x="226.40" y="44.90" width="9.10" height="2.80"/><rect x="238.40" y="8.40" width="9.10" height="2.80"/><rect x="238.40" y="44.90" width="9.10" height="2.80"/><rect x="250.40" y="8.40" width="9.10" height="2.80"/><rect x="250.40" y="44.90" width="9.10" height="2.80"/><rect x="262.40" y="8.40" width="9.10" height="2.80"/><rect x="262.40" y="44.90" width="9.10" height="2.80"/><rect x="9.10" y="8.40" width="2.90" height="11.20"/><rect x="9.10" y="22.50" width="2.90" height="9.10"/><rect x="9.10" y="34.50" width="2.90" height="13.20"/><rect x="271.20" y="11.40" width="2.90" height="9.90"/><rect x="271.20" y="23.30" width="2.90" height="9.90"/><rect x="271.20" y="35.20" width="2.90" height="12.50"/></g></svg>
<svg class="a" style="left:166px;top:493px;" width="22" height="22" viewBox="0 0 22 22"><circle cx="14" cy="9.2" r="6.2" fill="#fff" stroke="#0d2d6b" stroke-width="1.9"/><path d="M9.5,13.8 L3.5,19.5" stroke="#0d2d6b" stroke-width="2.8" stroke-linecap="round"/><circle cx="14" cy="6.2" r="1.1" fill="#111"/><rect x="13" y="8" width="2" height="5.2" fill="#111"/></svg>
<svg class="a" style="left:420px;top:330px;" width="60" height="140" viewBox="0 0 60 140"><defs><linearGradient id="rg" x1="0" y1="0" x2="0" y2="1"><stop offset="0" stop-color="#960000"/><stop offset="0.4" stop-color="#a80000"/><stop offset="0.75" stop-color="#e00000"/><stop offset="1" stop-color="#ff0000"/></linearGradient></defs><path d="M6.00,6.30 C6.98,7.23 9.70,9.97 11.90,11.90 C14.10,13.83 16.98,16.30 19.20,17.90 C21.42,19.50 23.43,20.57 25.20,21.50 C26.97,22.43 28.53,23.55 29.80,23.50 C31.07,23.45 32.13,22.25 32.80,21.20 C33.47,20.15 33.63,18.58 33.80,17.20 C33.97,15.82 33.80,13.62 33.80,12.90 C34.57,13.85 37.03,16.77 38.40,18.60 C39.77,20.43 40.82,21.70 42.00,23.90 C43.18,26.10 44.12,27.62 45.50,31.80 C46.88,35.98 49.27,43.97 50.30,49.00 C51.33,54.03 51.58,57.67 51.70,62.00 C51.82,66.33 51.45,71.00 51.00,75.00 C50.55,79.00 49.83,82.42 49.00,86.00 C48.17,89.58 47.25,93.17 46.00,96.50 C44.75,99.83 43.05,103.05 41.50,106.00 C39.95,108.95 37.50,112.83 36.70,114.20 L50.20,116.40 L15.20,136.30 L23.30,95.40 L30.80,109.40 C31.50,107.25 33.83,100.57 35.00,96.50 C36.17,92.43 37.07,88.58 37.80,85.00 C38.53,81.42 39.22,78.17 39.40,75.00 C39.58,71.83 39.55,69.67 38.90,66.00 C38.25,62.33 37.07,57.58 35.50,53.00 C33.93,48.42 31.43,42.37 29.50,38.50 C27.57,34.63 26.28,33.35 23.90,29.80 C21.52,26.25 18.18,21.12 15.20,17.20 C12.22,13.28 7.53,8.12 6.00,6.30 Z" fill="url(#rg)"/></svg>
<div class="a" style="left:0px;top:0px;width:744px;height:2px;background:repeating-linear-gradient(90deg,#2f6f3c 0 2px,#d9d9d9 2px 4px);"></div>
<div class="a" style="left:0px;top:602px;width:744px;height:2px;background:repeating-linear-gradient(90deg,#2f6f3c 0 2px,#d9d9d9 2px 4px);"></div>
<div class="a" style="left:0px;top:0px;width:2px;height:604px;background:repeating-linear-gradient(180deg,#2f6f3c 0 2px,#d9d9d9 2px 4px);"></div>
<div class="a" style="left:742px;top:0px;width:2px;height:604px;background:repeating-linear-gradient(180deg,#2f6f3c 0 2px,#d9d9d9 2px 4px);"></div>
</div></body></html>
